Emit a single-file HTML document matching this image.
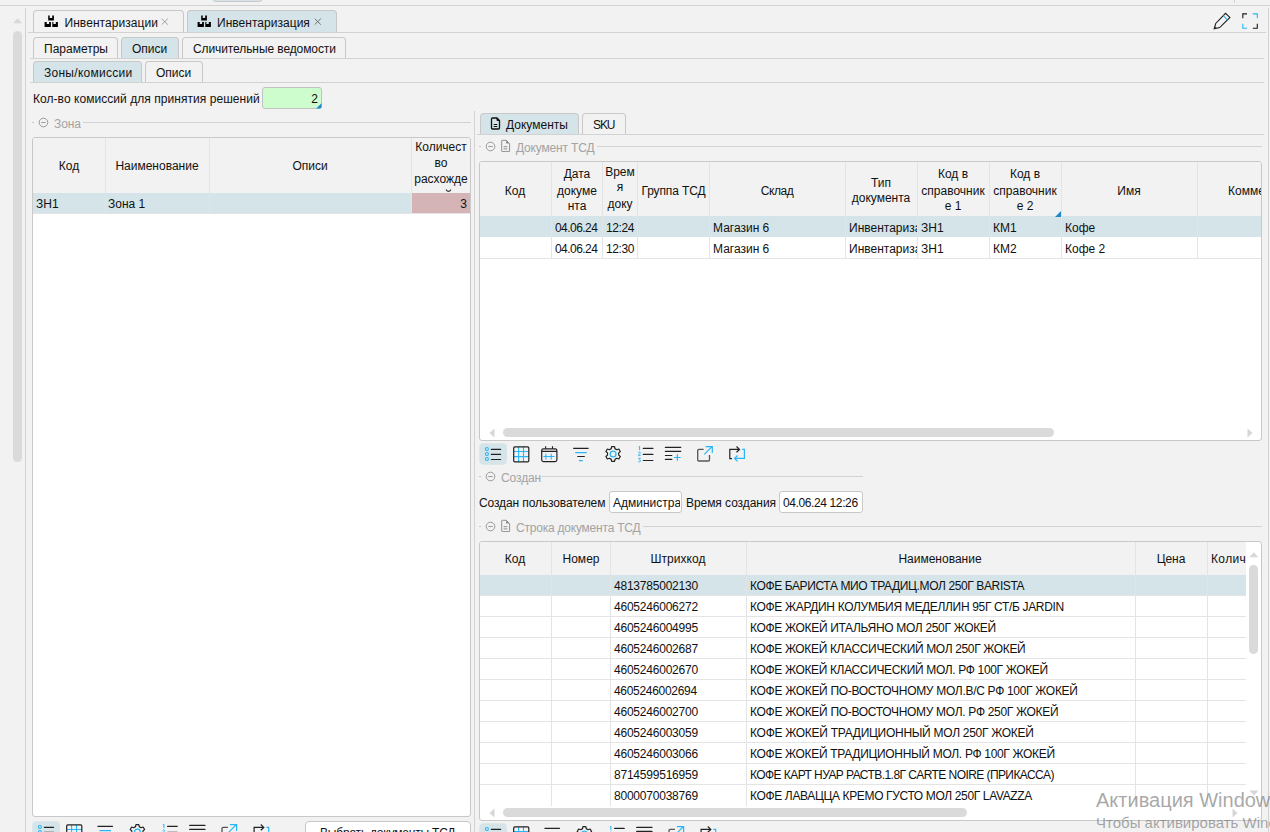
<!DOCTYPE html><html><head><meta charset="utf-8"><style>
html,body{margin:0;padding:0;width:1270px;height:832px;overflow:hidden;background:#f2f2f2}
body{position:relative;font-family:"Liberation Sans",sans-serif;font-size:12px;color:#111}
div{position:absolute;box-sizing:border-box}
svg{display:block}
.t{white-space:nowrap;font-size:12px;line-height:14px;height:14px}
</style></head><body>
<div style="left:212px;top:-4px;width:51px;height:6px;background:#d4e4e9;border:1px solid #c8c8c8;border-radius:0 0 4px 4px;"></div>
<div style="left:0px;top:5px;width:1270px;height:1px;background:#d2d2d2"></div>
<div style="left:1234px;top:0px;width:1px;height:3px;background:#d2d2d2"></div>
<svg style="position:absolute;left:12.9px;top:17.6px" width="10" height="6"><path d="M0 5.3 L4.6 0.2 L9.2 5.3Z" fill="#d8d8d8"/></svg>
<div style="left:13px;top:31px;width:9px;height:431px;background:#dadada;border-radius:4.5px"></div>
<div style="left:25px;top:8px;width:1px;height:824px;background:#d2d2d2"></div>
<div style="left:1268px;top:8px;width:1px;height:824px;background:#d2d2d2"></div>
<div style="left:33px;top:10px;width:151px;height:22px;background:#f2f2f2;border:1px solid #c8c8c8;border-bottom:none;border-radius:4px 4px 0 0"></div>
<div style="left:187px;top:10px;width:150px;height:22px;background:#d4e4e9;border:1px solid #c8c8c8;border-bottom:none;border-radius:4px 4px 0 0"></div>
<div style="left:28px;top:32px;width:1238px;height:1px;background:#d2d2d2"></div>
<div style="left:44px;top:15px"><svg width="15" height="13" viewBox="0 0 15 13"><path d="M4.2 0.6h1.5v2.4h2.5V0.6h1.7v4.8h-5.7z M0.6 6.9h2.1v2h2.4V6.9h1.8v5h-6.3z M8.3 6.9h1.1v2h2.4V6.9h2.1v5h-5.6z" fill="#000"/></svg></div>
<div style="left:197px;top:15px"><svg width="15" height="13" viewBox="0 0 15 13"><path d="M4.2 0.6h1.5v2.4h2.5V0.6h1.7v4.8h-5.7z M0.6 6.9h2.1v2h2.4V6.9h1.8v5h-6.3z M8.3 6.9h1.1v2h2.4V6.9h2.1v5h-5.6z" fill="#000"/></svg></div>
<div class="t" style="left:64.5px;top:16px;letter-spacing:0.054px;">Инвентаризации</div>
<svg style="position:absolute;left:161px;top:18.3px" width="8" height="8"><path d="M0.7 0.7L6.8 6.6M6.8 0.7L0.7 6.6" stroke="#a0a0a0" stroke-width="1"/></svg>
<div class="t" style="left:217px;top:16px;letter-spacing:0.031px;">Инвентаризация</div>
<svg style="position:absolute;left:314px;top:18.3px" width="8" height="8"><path d="M0.7 0.7L6.8 6.6M6.8 0.7L0.7 6.6" stroke="#707070" stroke-width="1"/></svg>
<svg style="position:absolute;left:1212px;top:11px" width="20" height="20" viewBox="0 0 20 20"><path d="M2.1 17.8L3.7 12.5L13.5 2.3L17.9 6.4L7.7 16.6Z" fill="none" stroke="#1a1a1a" stroke-width="1.05" stroke-linejoin="miter"/><path d="M2.3 17.6L3.1 15.3L4.9 17.1Z" fill="#444"/><path d="M11.2 4.7L15.4 8.8" stroke="#29b6f6" stroke-width="1.1"/></svg>
<svg style="position:absolute;left:1241px;top:12px" width="18" height="18" viewBox="0 0 18 18"><path d="M1.8 6.2V1.9H6" fill="none" stroke="#1a1a1a" stroke-width="1.1"/><path d="M11.8 1.9H16.3V6.2" fill="none" stroke="#29b6f6" stroke-width="1.1"/><path d="M1.8 11.8V16.2H6" fill="none" stroke="#29b6f6" stroke-width="1.1"/><path d="M11.8 16.2H16.3V11.8" fill="none" stroke="#1a1a1a" stroke-width="1.1"/></svg>
<div style="left:33px;top:37px;width:85px;height:21px;background:#f2f2f2;border:1px solid #c8c8c8;border-bottom:none;border-radius:4px 4px 0 0"></div>
<div style="left:121px;top:37px;width:58px;height:21px;background:#d4e4e9;border:1px solid #c8c8c8;border-bottom:none;border-radius:4px 4px 0 0"></div>
<div style="left:182px;top:37px;width:164px;height:21px;background:#f2f2f2;border:1px solid #c8c8c8;border-bottom:none;border-radius:4px 4px 0 0"></div>
<div style="left:30px;top:58px;width:1234px;height:1px;background:#d2d2d2"></div>
<div class="t" style="left:44px;top:42px;">Параметры</div>
<div class="t" style="left:132px;top:42px;">Описи</div>
<div class="t" style="left:193px;top:42px;letter-spacing:-0.095px;">Сличительные ведомости</div>
<div style="left:33px;top:61px;width:109px;height:21px;background:#d4e4e9;border:1px solid #c8c8c8;border-bottom:none;border-radius:4px 4px 0 0"></div>
<div style="left:145px;top:61px;width:58px;height:21px;background:#f2f2f2;border:1px solid #c8c8c8;border-bottom:none;border-radius:4px 4px 0 0"></div>
<div style="left:30px;top:82px;width:1234px;height:1px;background:#d2d2d2"></div>
<div class="t" style="left:44px;top:66px;letter-spacing:0.275px;">Зоны/комиссии</div>
<div class="t" style="left:156px;top:66px;">Описи</div>
<div class="t" style="left:33px;top:92px;letter-spacing:0.049px;">Кол-во комиссий для принятия решений</div>
<div style="left:262px;top:87px;width:60px;height:22px;background:#cdfccd;border:1px solid #c2c2c2;border-radius:3px"></div>
<svg style="position:absolute;left:315.5px;top:102.5px" width="6" height="6"><path d="M5.5 0.2V3.8Q5.5 5.5 3.8 5.5H0.2Z" fill="#1b8ad0"/></svg>
<div class="t" style="left:118px;top:92px;width:200px;text-align:right;">2</div>
<div style="left:32px;top:122px;width:2px;height:1px;background:#c8c8c8"></div>
<svg style="position:absolute;left:38px;top:117px" width="11" height="11" viewBox="0 0 11 11"><circle cx="5.5" cy="5.5" r="4.3" fill="none" stroke="#8e8e8e" stroke-width="0.9"/><path d="M3.3 5.5h4.4" stroke="#8e8e8e" stroke-width="0.9"/></svg>
<div class="t" style="left:54px;top:117px;letter-spacing:-0.067px;color:#a3a3a3">Зона</div>
<div style="left:83px;top:122px;width:388px;height:1px;background:#d2d2d2"></div>
<div style="left:32px;top:137px;width:439px;height:680px;background:#fff;border:1px solid #c8c8c8;border-radius:3px;overflow:hidden"><div style="left:0;top:0;width:437px;height:55px;background:#f2f2f2"></div><div style="left:0;top:55px;width:379px;height:20px;background:#d4e4e9"></div><div style="left:379px;top:55px;width:58px;height:20px;background:#d4b4b7"></div><div style="left:0;top:75px;width:437px;height:1px;background:#e4e4e4"></div><div style="left:72px;top:0;width:1px;height:75px;background:#e4e4e4"></div><div style="left:176px;top:0;width:1px;height:75px;background:#e4e4e4"></div><div style="left:378px;top:0;width:1px;height:75px;background:#e4e4e4"></div></div>
<div class="t" style="left:-31.0px;top:159px;width:200px;text-align:center;">Код</div>
<div class="t" style="left:57.0px;top:159px;width:200px;text-align:center;">Наименование</div>
<div class="t" style="left:210.0px;top:159px;width:200px;text-align:center;">Описи</div>
<div class="t" style="left:401.0px;top:140px;width:80px;text-align:center;">Количест</div>
<div class="t" style="left:401.0px;top:156px;width:80px;text-align:center;">во</div>
<div class="t" style="left:401.0px;top:172px;width:80px;text-align:center;">расхожде</div>
<div class="t" style="left:36px;top:197px;">ЗН1</div>
<div class="t" style="left:108px;top:197px;">Зона 1</div>
<div class="t" style="left:267px;top:197px;width:200px;text-align:right;">3</div>
<svg style="position:absolute;left:445px;top:189px" width="7" height="4"><path d="M1 0.6Q3.5 4.2 6 0.6" fill="none" stroke="#333" stroke-width="1.1"/></svg>
<div style="left:474px;top:111px;width:1px;height:721px;background:#d2d2d2"></div>
<div style="left:480px;top:113px;width:99px;height:21px;background:#d4e4e9;border:1px solid #c8c8c8;border-bottom:none;border-radius:4px 4px 0 0"></div>
<div style="left:582px;top:113px;width:44px;height:21px;background:#f2f2f2;border:1px solid #c8c8c8;border-bottom:none;border-radius:4px 4px 0 0"></div>
<div style="left:477px;top:134px;width:787px;height:1px;background:#d2d2d2"></div>
<div style="left:490px;top:117px"><svg width="11" height="13" viewBox="0 0 11 13"><path d="M1.5 2Q1.5 1 2.5 1H7L9.5 3.5V11Q9.5 12 8.5 12H2.5Q1.5 12 1.5 11Z" fill="none" stroke="#111" stroke-width="1.3"/><path d="M7 1V3.5H9.5" fill="#111" stroke="#111" stroke-width="1"/><path d="M3.7 7.5h3.6M3.7 9.5h3.6" stroke="#111" stroke-width="1.1"/></svg></div>
<div class="t" style="left:506px;top:118px;letter-spacing:0.013px;">Документы</div>
<div class="t" style="left:593px;top:118px;letter-spacing:-1.100px;">SKU</div>
<div style="left:479px;top:146px;width:2px;height:1px;background:#c8c8c8"></div>
<svg style="position:absolute;left:485px;top:141px" width="11" height="11" viewBox="0 0 11 11"><circle cx="5.5" cy="5.5" r="4.3" fill="none" stroke="#8e8e8e" stroke-width="0.9"/><path d="M3.3 5.5h4.4" stroke="#8e8e8e" stroke-width="0.9"/></svg>
<svg style="position:absolute;left:500px;top:139px" width="11" height="13" viewBox="0 0 11 13"><path d="M1.7 1.8Q1.7 1.3 2.2 1.3H6.3L9.6 4.6V12.1Q9.6 12.6 9.1 12.6H2.2Q1.7 12.6 1.7 12.1Z" fill="none" stroke="#8a8a8a" stroke-width="0.95"/><path d="M6.1 1.3V4.6H9.6Z" fill="#8a8a8a"/><path d="M3.6 7.7h3.8M3.6 9.9h3.8" stroke="#8a8a8a" stroke-width="0.95"/></svg>
<div class="t" style="left:516px;top:141px;letter-spacing:-0.173px;color:#a3a3a3">Документ ТСД</div>
<div style="left:597px;top:146px;width:665px;height:1px;background:#d2d2d2"></div>
<div style="left:479px;top:161px;width:783px;height:280px;background:#fff;border:1px solid #c8c8c8;border-radius:3px;overflow:hidden"><div style="left:0;top:0;width:783px;height:54px;background:#f2f2f2"></div><div style="left:0;top:54px;width:783px;height:21px;background:#d4e4e9"></div><div style="left:0;top:96px;width:783px;height:1px;background:#e4e4e4"></div><div style="left:71px;top:0;width:1px;height:96px;background:#e4e4e4"></div><div style="left:122px;top:0;width:1px;height:96px;background:#e4e4e4"></div><div style="left:157px;top:0;width:1px;height:96px;background:#e4e4e4"></div><div style="left:229px;top:0;width:1px;height:96px;background:#e4e4e4"></div><div style="left:365px;top:0;width:1px;height:96px;background:#e4e4e4"></div><div style="left:437px;top:0;width:1px;height:96px;background:#e4e4e4"></div><div style="left:509px;top:0;width:1px;height:96px;background:#e4e4e4"></div><div style="left:581px;top:0;width:1px;height:96px;background:#e4e4e4"></div><div style="left:717px;top:0;width:1px;height:96px;background:#e4e4e4"></div><svg style="position:absolute;left:8.5px;top:266px" width="6" height="10"><path d="M5.5 0.5V9.5L0.5 5Z" fill="#d6d6d6"/></svg><div style="left:23px;top:266px;width:551px;height:9px;background:#dadada;border-radius:4.5px"></div><svg style="position:absolute;left:767px;top:266px" width="6" height="10"><path d="M0.5 0.5V9.5L5.5 5Z" fill="#d6d6d6"/></svg></div>
<svg style="position:absolute;left:1055px;top:211px" width="6" height="6"><path d="M6 0V6H0Z" fill="#1e88c8"/></svg>
<div class="t" style="left:415.0px;top:184px;width:200px;text-align:center;">Код</div>
<div class="t" style="left:547.0px;top:167px;width:60px;text-align:center;">Дата</div>
<div class="t" style="left:547.0px;top:184px;width:60px;text-align:center;">докуме</div>
<div class="t" style="left:547.0px;top:199px;width:60px;text-align:center;">нта</div>
<div class="t" style="left:600.0px;top:165px;width:40px;text-align:center;">Врем</div>
<div class="t" style="left:600.0px;top:180px;width:40px;text-align:center;">я</div>
<div class="t" style="left:600.0px;top:197px;width:40px;text-align:center;">доку</div>
<div class="t" style="left:633.5px;top:184px;width:80px;text-align:center;letter-spacing:-0.111px;">Группа ТСД</div>
<div class="t" style="left:717.0px;top:184px;width:120px;text-align:center;letter-spacing:-0.450px;">Склад</div>
<div class="t" style="left:841.0px;top:176px;width:80px;text-align:center;">Тип</div>
<div class="t" style="left:841.0px;top:191px;width:80px;text-align:center;">документа</div>
<div class="t" style="left:913.0px;top:167px;width:80px;text-align:center;">Код в</div>
<div class="t" style="left:913.0px;top:184px;width:80px;text-align:center;">справочник</div>
<div class="t" style="left:913.0px;top:199px;width:80px;text-align:center;">е 1</div>
<div class="t" style="left:985.0px;top:167px;width:80px;text-align:center;">Код в</div>
<div class="t" style="left:985.0px;top:184px;width:80px;text-align:center;">справочник</div>
<div class="t" style="left:985.0px;top:199px;width:80px;text-align:center;">е 2</div>
<div class="t" style="left:1089.0px;top:184px;width:80px;text-align:center;">Имя</div>
<div class="t" style="left:1228px;top:184px;width:33px;overflow:hidden">Комментарий</div>
<div class="t" style="left:555px;top:221px;letter-spacing:-0.557px;">04.06.24</div>
<div class="t" style="left:606px;top:221px;letter-spacing:-0.400px;">12:24</div>
<div class="t" style="left:713px;top:221px;">Магазин 6</div>
<div class="t" style="left:849px;top:221px;width:68px;overflow:hidden">Инвентаризация</div>
<div class="t" style="left:921px;top:221px;">ЗН1</div>
<div class="t" style="left:993px;top:221px;">КМ1</div>
<div class="t" style="left:1065px;top:221px;">Кофе</div>
<div class="t" style="left:555px;top:242px;letter-spacing:-0.557px;">04.06.24</div>
<div class="t" style="left:606px;top:242px;letter-spacing:-0.400px;">12:30</div>
<div class="t" style="left:713px;top:242px;">Магазин 6</div>
<div class="t" style="left:849px;top:242px;width:68px;overflow:hidden">Инвентаризация</div>
<div class="t" style="left:921px;top:242px;">ЗН1</div>
<div class="t" style="left:993px;top:242px;">КМ2</div>
<div class="t" style="left:1065px;top:242px;">Кофе 2</div>
<svg style="position:absolute;left:479px;top:443px;overflow:visible" width="270" height="22"><rect x="0.3" y="0.3" width="27.6" height="21.4" rx="4" fill="#d4e4e9"/><circle cx="7.9" cy="6" r="1.5" fill="none" stroke="#29b6f6" stroke-width="1.1"/><circle cx="7.9" cy="11" r="1.5" fill="none" stroke="#29b6f6" stroke-width="1.1"/><circle cx="7.9" cy="16" r="1.5" fill="none" stroke="#29b6f6" stroke-width="1.1"/><path d="M12.4 6.4H21.6M12.4 11.4H21.6M12.4 16.5H21.6" stroke="#222" stroke-width="1.2" stroke-linecap="round"/><path d="M39.6 4V18.8M44.5 4V18.8M34.8 8.5H49.8M34.8 13.6H49.8" stroke="#29b6f6" stroke-width="1.1"/><rect x="34.7" y="3.9" width="15.1" height="14.9" rx="1" fill="none" stroke="#222" stroke-width="1.2"/><rect x="62.7" y="5.8" width="15.2" height="12.8" rx="1.8" fill="none" stroke="#222" stroke-width="1.2"/><path d="M62.7 8.4H77.9M66.6 3.2V5.8M73.5 3.2V5.8" stroke="#222" stroke-width="1.1"/><path d="M64.4 13.5H75.6M66.9 10.8V16.5M72.2 10.8V16.5" stroke="#29b6f6" stroke-width="1.1"/><g transform="translate(0,0)"><path d="M94.2 5.4H109.6M98.3 13.5H105.8" stroke="#222" stroke-width="1.2"/><path d="M96.2 9.6H107.7M100 17.6H103.8" stroke="#29b6f6" stroke-width="1.2"/><path d="M135.96 5.61 L135.55 3.54 L132.65 3.54 L132.24 5.61 L130.36 6.70 L128.36 6.01 L126.91 8.53 L128.50 9.91 L128.50 12.09 L126.91 13.47 L128.36 15.99 L130.36 15.30 L132.24 16.39 L132.65 18.46 L135.55 18.46 L135.96 16.39 L137.84 15.30 L139.84 15.99 L141.29 13.47 L139.70 12.09 L139.70 9.91 L141.29 8.53 L139.84 6.01 L137.84 6.70Z" fill="none" stroke="#222" stroke-width="1.2" stroke-linejoin="round"/><circle cx="134.1" cy="11" r="2.9" fill="none" stroke="#29b6f6" stroke-width="1.3"/><path d="M159.6 4.2L160.6 3.2V7.2" fill="none" stroke="#29b6f6" stroke-width="1"/><path d="M159.3 9.6Q160.3 8.6 161.3 9.3Q161.5 10.2 159.3 12.4H161.7" fill="none" stroke="#29b6f6" stroke-width="0.9"/><path d="M159.3 15.2H161.4L160.2 16.6Q161.8 16.8 161.4 18.4Q160.6 19.4 159.2 18.6" fill="none" stroke="#29b6f6" stroke-width="0.9"/><path d="M164.3 5.4H173.9M164.3 11.4H173.9M164.3 17.5H173.9" stroke="#222" stroke-width="1.2" stroke-linecap="round"/><path d="M186.4 4.4H201.7M186.4 8.4H201.7M186.4 12.5H192.8M186.4 16.4H192.8" stroke="#222" stroke-width="1.2" stroke-linecap="round"/><path d="M198.4 11.2V17.8M195.1 14.5H201.7" stroke="#29b6f6" stroke-width="1.2"/><path d="M224.6 6.4H219.8Q218.7 6.4 218.7 7.5V16.9Q218.7 18 219.8 18H229.4Q230.5 18 230.5 16.9V12.1" fill="none" stroke="#555" stroke-width="1.3"/><path d="M225.3 11.4L233 3.7M226.6 3.6H233.3V10" fill="none" stroke="#29b6f6" stroke-width="1.2"/><path d="M253 15.7H250.8V6.4H260.5M257.5 3.5L260.5 6.4L257.5 9.3" fill="none" stroke="#222" stroke-width="1.2"/><path d="M263.1 6.4H265.4V15.4H255.7M258.5 12.5L255.6 15.4L258.5 18.3" fill="none" stroke="#29b6f6" stroke-width="1.2"/></g></svg>
<div style="left:479px;top:476px;width:2px;height:1px;background:#c8c8c8"></div>
<svg style="position:absolute;left:485px;top:471px" width="11" height="11" viewBox="0 0 11 11"><circle cx="5.5" cy="5.5" r="4.3" fill="none" stroke="#8e8e8e" stroke-width="0.9"/><path d="M3.3 5.5h4.4" stroke="#8e8e8e" stroke-width="0.9"/></svg>
<div class="t" style="left:501px;top:471px;letter-spacing:-0.100px;color:#a3a3a3">Создан</div>
<div style="left:542px;top:476px;width:321px;height:1px;background:#d2d2d2"></div>
<div class="t" style="left:479px;top:496px;letter-spacing:-0.111px;">Создан пользователем</div>
<div style="left:609px;top:491px;width:73px;height:22px;background:#fff;border:1px solid #c8c8c8;border-radius:3px"></div>
<div class="t" style="left:613px;top:496px;width:67px;overflow:hidden">Администратор</div>
<div class="t" style="left:686px;top:496px;letter-spacing:-0.062px;">Время создания</div>
<div style="left:779px;top:491px;width:84px;height:22px;background:#fff;border:1px solid #c8c8c8;border-radius:3px"></div>
<div class="t" style="left:783px;top:496px;letter-spacing:-0.385px;">04.06.24 12:26</div>
<div style="left:479px;top:526px;width:2px;height:1px;background:#c8c8c8"></div>
<svg style="position:absolute;left:485px;top:521px" width="11" height="11" viewBox="0 0 11 11"><circle cx="5.5" cy="5.5" r="4.3" fill="none" stroke="#8e8e8e" stroke-width="0.9"/><path d="M3.3 5.5h4.4" stroke="#8e8e8e" stroke-width="0.9"/></svg>
<svg style="position:absolute;left:500px;top:519px" width="11" height="13" viewBox="0 0 11 13"><path d="M1.7 1.8Q1.7 1.3 2.2 1.3H6.3L9.6 4.6V12.1Q9.6 12.6 9.1 12.6H2.2Q1.7 12.6 1.7 12.1Z" fill="none" stroke="#8a8a8a" stroke-width="0.95"/><path d="M6.1 1.3V4.6H9.6Z" fill="#8a8a8a"/><path d="M3.6 7.7h3.8M3.6 9.9h3.8" stroke="#8a8a8a" stroke-width="0.95"/></svg>
<div class="t" style="left:516px;top:521px;letter-spacing:-0.216px;color:#a3a3a3">Строка документа ТСД</div>
<div style="left:643px;top:526px;width:619px;height:1px;background:#d2d2d2"></div>
<div style="left:479px;top:541px;width:783px;height:280px;background:#fff;border:1px solid #c8c8c8;border-radius:3px;overflow:hidden"><div style="left:0;top:0;width:766px;height:33px;background:#f2f2f2"></div><div style="left:0;top:33px;width:766px;height:21px;background:#d4e4e9"></div><div style="left:0;top:53px;width:766px;height:1px;background:#e4e4e4"></div><div style="left:0;top:74px;width:766px;height:1px;background:#e4e4e4"></div><div style="left:0;top:95px;width:766px;height:1px;background:#e4e4e4"></div><div style="left:0;top:116px;width:766px;height:1px;background:#e4e4e4"></div><div style="left:0;top:137px;width:766px;height:1px;background:#e4e4e4"></div><div style="left:0;top:158px;width:766px;height:1px;background:#e4e4e4"></div><div style="left:0;top:179px;width:766px;height:1px;background:#e4e4e4"></div><div style="left:0;top:200px;width:766px;height:1px;background:#e4e4e4"></div><div style="left:0;top:221px;width:766px;height:1px;background:#e4e4e4"></div><div style="left:0;top:242px;width:766px;height:1px;background:#e4e4e4"></div><div style="left:71px;top:0;width:1px;height:264px;background:#e4e4e4"></div><div style="left:130px;top:0;width:1px;height:264px;background:#e4e4e4"></div><div style="left:266px;top:0;width:1px;height:264px;background:#e4e4e4"></div><div style="left:655px;top:0;width:1px;height:264px;background:#e4e4e4"></div><div style="left:727px;top:0;width:1px;height:264px;background:#e4e4e4"></div><svg style="position:absolute;left:768.5px;top:9.5px" width="10" height="6"><path d="M0.3 5.3H9.3L4.8 0.2Z" fill="#d8d8d8"/></svg><div style="left:769.2px;top:23px;width:8.8px;height:89px;background:#dadada;border-radius:4.4px"></div><svg style="position:absolute;left:769px;top:248px" width="10" height="6"><path d="M0.5 0.5H9.5L5 5.5Z" fill="#d6d6d6"/></svg><svg style="position:absolute;left:8.5px;top:266px" width="6" height="10"><path d="M5.5 0.5V9.5L0.5 5Z" fill="#d6d6d6"/></svg><div style="left:23px;top:266px;width:464px;height:9px;background:#dadada;border-radius:4.5px"></div><svg style="position:absolute;left:752px;top:266px" width="6" height="10"><path d="M0.5 0.5V9.5L5.5 5Z" fill="#d6d6d6"/></svg></div>
<div class="t" style="left:415.0px;top:552px;width:200px;text-align:center;">Код</div>
<div class="t" style="left:551.0px;top:552px;width:60px;text-align:center;letter-spacing:0.025px;">Номер</div>
<div class="t" style="left:618.0px;top:552px;width:120px;text-align:center;letter-spacing:0.043px;">Штрихкод</div>
<div class="t" style="left:840.0px;top:552px;width:200px;text-align:center;">Наименование</div>
<div class="t" style="left:1141.0px;top:552px;width:60px;text-align:center;letter-spacing:-0.100px;">Цена</div>
<div class="t" style="left:1211px;top:552px;letter-spacing:0.375px;width:35px;overflow:hidden">Колич</div>
<div class="t" style="left:614px;top:579px;letter-spacing:-0.217px;">4813785002130</div>
<div class="t" style="left:750px;top:579px;letter-spacing:-0.379px;">КОФЕ БАРИСТА МИО ТРАДИЦ.МОЛ 250Г BARISTA</div>
<div class="t" style="left:614px;top:600px;letter-spacing:-0.217px;">4605246006272</div>
<div class="t" style="left:750px;top:600px;letter-spacing:-0.334px;">КОФЕ ЖАРДИН КОЛУМБИЯ МЕДЕЛЛИН 95Г СТ/Б JARDIN</div>
<div class="t" style="left:614px;top:621px;letter-spacing:-0.217px;">4605246004995</div>
<div class="t" style="left:750px;top:621px;letter-spacing:-0.324px;">КОФЕ ЖОКЕЙ ИТАЛЬЯНО МОЛ 250Г ЖОКЕЙ</div>
<div class="t" style="left:614px;top:642px;letter-spacing:-0.217px;">4605246002687</div>
<div class="t" style="left:750px;top:642px;letter-spacing:-0.349px;">КОФЕ ЖОКЕЙ КЛАССИЧЕСКИЙ МОЛ 250Г ЖОКЕЙ</div>
<div class="t" style="left:614px;top:663px;letter-spacing:-0.217px;">4605246002670</div>
<div class="t" style="left:750px;top:663px;letter-spacing:-0.344px;">КОФЕ ЖОКЕЙ КЛАССИЧЕСКИЙ МОЛ. РФ 100Г ЖОКЕЙ</div>
<div class="t" style="left:614px;top:684px;letter-spacing:-0.300px;">4605246002694</div>
<div class="t" style="left:750px;top:684px;letter-spacing:-0.300px;">КОФЕ ЖОКЕЙ ПО-ВОСТОЧНОМУ МОЛ.В/С РФ 100Г ЖОКЕЙ</div>
<div class="t" style="left:614px;top:705px;letter-spacing:-0.217px;">4605246002700</div>
<div class="t" style="left:750px;top:705px;letter-spacing:-0.305px;">КОФЕ ЖОКЕЙ ПО-ВОСТОЧНОМУ МОЛ. РФ 250Г ЖОКЕЙ</div>
<div class="t" style="left:614px;top:726px;letter-spacing:-0.217px;">4605246003059</div>
<div class="t" style="left:750px;top:726px;letter-spacing:-0.278px;">КОФЕ ЖОКЕЙ ТРАДИЦИОННЫЙ МОЛ 250Г ЖОКЕЙ</div>
<div class="t" style="left:614px;top:747px;letter-spacing:-0.217px;">4605246003066</div>
<div class="t" style="left:750px;top:747px;letter-spacing:-0.312px;">КОФЕ ЖОКЕЙ ТРАДИЦИОННЫЙ МОЛ. РФ 100Г ЖОКЕЙ</div>
<div class="t" style="left:614px;top:768px;letter-spacing:-0.217px;">8714599516959</div>
<div class="t" style="left:750px;top:768px;letter-spacing:-0.570px;">КОФЕ КАРТ НУАР РАСТВ.1.8Г CARTE NOIRE (ПРИКАССА)</div>
<div class="t" style="left:614px;top:789px;letter-spacing:-0.217px;">8000070038769</div>
<div class="t" style="left:750px;top:789px;letter-spacing:-0.358px;">КОФЕ ЛАВАЦЦА КРЕМО ГУСТО МОЛ 250Г LAVAZZA</div>
<svg style="position:absolute;left:479px;top:823px;overflow:visible" width="270" height="22"><rect x="0.3" y="0.3" width="27.6" height="21.4" rx="4" fill="#d4e4e9"/><circle cx="7.9" cy="6" r="1.5" fill="none" stroke="#29b6f6" stroke-width="1.1"/><circle cx="7.9" cy="11" r="1.5" fill="none" stroke="#29b6f6" stroke-width="1.1"/><circle cx="7.9" cy="16" r="1.5" fill="none" stroke="#29b6f6" stroke-width="1.1"/><path d="M12.4 6.4H21.6M12.4 11.4H21.6M12.4 16.5H21.6" stroke="#222" stroke-width="1.2" stroke-linecap="round"/><path d="M39.6 4V18.8M44.5 4V18.8M34.8 8.5H49.8M34.8 13.6H49.8" stroke="#29b6f6" stroke-width="1.1"/><rect x="34.7" y="3.9" width="15.1" height="14.9" rx="1" fill="none" stroke="#222" stroke-width="1.2"/><g transform="translate(-28.7,0)"><path d="M94.2 5.4H109.6M98.3 13.5H105.8" stroke="#222" stroke-width="1.2"/><path d="M96.2 9.6H107.7M100 17.6H103.8" stroke="#29b6f6" stroke-width="1.2"/><path d="M135.96 5.61 L135.55 3.54 L132.65 3.54 L132.24 5.61 L130.36 6.70 L128.36 6.01 L126.91 8.53 L128.50 9.91 L128.50 12.09 L126.91 13.47 L128.36 15.99 L130.36 15.30 L132.24 16.39 L132.65 18.46 L135.55 18.46 L135.96 16.39 L137.84 15.30 L139.84 15.99 L141.29 13.47 L139.70 12.09 L139.70 9.91 L141.29 8.53 L139.84 6.01 L137.84 6.70Z" fill="none" stroke="#222" stroke-width="1.2" stroke-linejoin="round"/><circle cx="134.1" cy="11" r="2.9" fill="none" stroke="#29b6f6" stroke-width="1.3"/><path d="M159.6 4.2L160.6 3.2V7.2" fill="none" stroke="#29b6f6" stroke-width="1"/><path d="M159.3 9.6Q160.3 8.6 161.3 9.3Q161.5 10.2 159.3 12.4H161.7" fill="none" stroke="#29b6f6" stroke-width="0.9"/><path d="M159.3 15.2H161.4L160.2 16.6Q161.8 16.8 161.4 18.4Q160.6 19.4 159.2 18.6" fill="none" stroke="#29b6f6" stroke-width="0.9"/><path d="M164.3 5.4H173.9M164.3 11.4H173.9M164.3 17.5H173.9" stroke="#222" stroke-width="1.2" stroke-linecap="round"/><path d="M186.4 4.4H201.7M186.4 8.4H201.7M186.4 12.5H192.8M186.4 16.4H192.8" stroke="#222" stroke-width="1.2" stroke-linecap="round"/><path d="M198.4 11.2V17.8M195.1 14.5H201.7" stroke="#29b6f6" stroke-width="1.2"/><path d="M224.6 6.4H219.8Q218.7 6.4 218.7 7.5V16.9Q218.7 18 219.8 18H229.4Q230.5 18 230.5 16.9V12.1" fill="none" stroke="#555" stroke-width="1.3"/><path d="M225.3 11.4L233 3.7M226.6 3.6H233.3V10" fill="none" stroke="#29b6f6" stroke-width="1.2"/><path d="M253 15.7H250.8V6.4H260.5M257.5 3.5L260.5 6.4L257.5 9.3" fill="none" stroke="#222" stroke-width="1.2"/><path d="M263.1 6.4H265.4V15.4H255.7M258.5 12.5L255.6 15.4L258.5 18.3" fill="none" stroke="#29b6f6" stroke-width="1.2"/></g></svg>
<svg style="position:absolute;left:32px;top:821px;overflow:visible" width="270" height="22"><rect x="0.3" y="0.3" width="27.6" height="21.4" rx="4" fill="#d4e4e9"/><circle cx="7.9" cy="6" r="1.5" fill="none" stroke="#29b6f6" stroke-width="1.1"/><circle cx="7.9" cy="11" r="1.5" fill="none" stroke="#29b6f6" stroke-width="1.1"/><circle cx="7.9" cy="16" r="1.5" fill="none" stroke="#29b6f6" stroke-width="1.1"/><path d="M12.4 6.4H21.6M12.4 11.4H21.6M12.4 16.5H21.6" stroke="#222" stroke-width="1.2" stroke-linecap="round"/><path d="M39.6 4V18.8M44.5 4V18.8M34.8 8.5H49.8M34.8 13.6H49.8" stroke="#29b6f6" stroke-width="1.1"/><rect x="34.7" y="3.9" width="15.1" height="14.9" rx="1" fill="none" stroke="#222" stroke-width="1.2"/><g transform="translate(-28.7,0)"><path d="M94.2 5.4H109.6M98.3 13.5H105.8" stroke="#222" stroke-width="1.2"/><path d="M96.2 9.6H107.7M100 17.6H103.8" stroke="#29b6f6" stroke-width="1.2"/><path d="M135.96 5.61 L135.55 3.54 L132.65 3.54 L132.24 5.61 L130.36 6.70 L128.36 6.01 L126.91 8.53 L128.50 9.91 L128.50 12.09 L126.91 13.47 L128.36 15.99 L130.36 15.30 L132.24 16.39 L132.65 18.46 L135.55 18.46 L135.96 16.39 L137.84 15.30 L139.84 15.99 L141.29 13.47 L139.70 12.09 L139.70 9.91 L141.29 8.53 L139.84 6.01 L137.84 6.70Z" fill="none" stroke="#222" stroke-width="1.2" stroke-linejoin="round"/><circle cx="134.1" cy="11" r="2.9" fill="none" stroke="#29b6f6" stroke-width="1.3"/><path d="M159.6 4.2L160.6 3.2V7.2" fill="none" stroke="#29b6f6" stroke-width="1"/><path d="M159.3 9.6Q160.3 8.6 161.3 9.3Q161.5 10.2 159.3 12.4H161.7" fill="none" stroke="#29b6f6" stroke-width="0.9"/><path d="M159.3 15.2H161.4L160.2 16.6Q161.8 16.8 161.4 18.4Q160.6 19.4 159.2 18.6" fill="none" stroke="#29b6f6" stroke-width="0.9"/><path d="M164.3 5.4H173.9M164.3 11.4H173.9M164.3 17.5H173.9" stroke="#222" stroke-width="1.2" stroke-linecap="round"/><path d="M186.4 4.4H201.7M186.4 8.4H201.7M186.4 12.5H192.8M186.4 16.4H192.8" stroke="#222" stroke-width="1.2" stroke-linecap="round"/><path d="M198.4 11.2V17.8M195.1 14.5H201.7" stroke="#29b6f6" stroke-width="1.2"/><path d="M224.6 6.4H219.8Q218.7 6.4 218.7 7.5V16.9Q218.7 18 219.8 18H229.4Q230.5 18 230.5 16.9V12.1" fill="none" stroke="#555" stroke-width="1.3"/><path d="M225.3 11.4L233 3.7M226.6 3.6H233.3V10" fill="none" stroke="#29b6f6" stroke-width="1.2"/><path d="M253 15.7H250.8V6.4H260.5M257.5 3.5L260.5 6.4L257.5 9.3" fill="none" stroke="#222" stroke-width="1.2"/><path d="M263.1 6.4H265.4V15.4H255.7M258.5 12.5L255.6 15.4L258.5 18.3" fill="none" stroke="#29b6f6" stroke-width="1.2"/></g></svg>
<div style="left:305px;top:821px;width:166px;height:22px;background:#fff;border:1px solid #c8c8c8;border-radius:4px"></div>
<div class="t" style="left:320px;top:826px;letter-spacing:-0.200px;">Выбрать документы ТСД</div>
<div style="left:1096px;top:788px;font-size:20px;line-height:24px;color:rgba(110,110,110,0.6);white-space:nowrap">Активация Windows</div>
<div style="left:1096px;top:813.5px;font-size:15px;line-height:18px;color:rgba(110,110,110,0.6);white-space:nowrap">Чтобы активировать Windows</div>
</body></html>
